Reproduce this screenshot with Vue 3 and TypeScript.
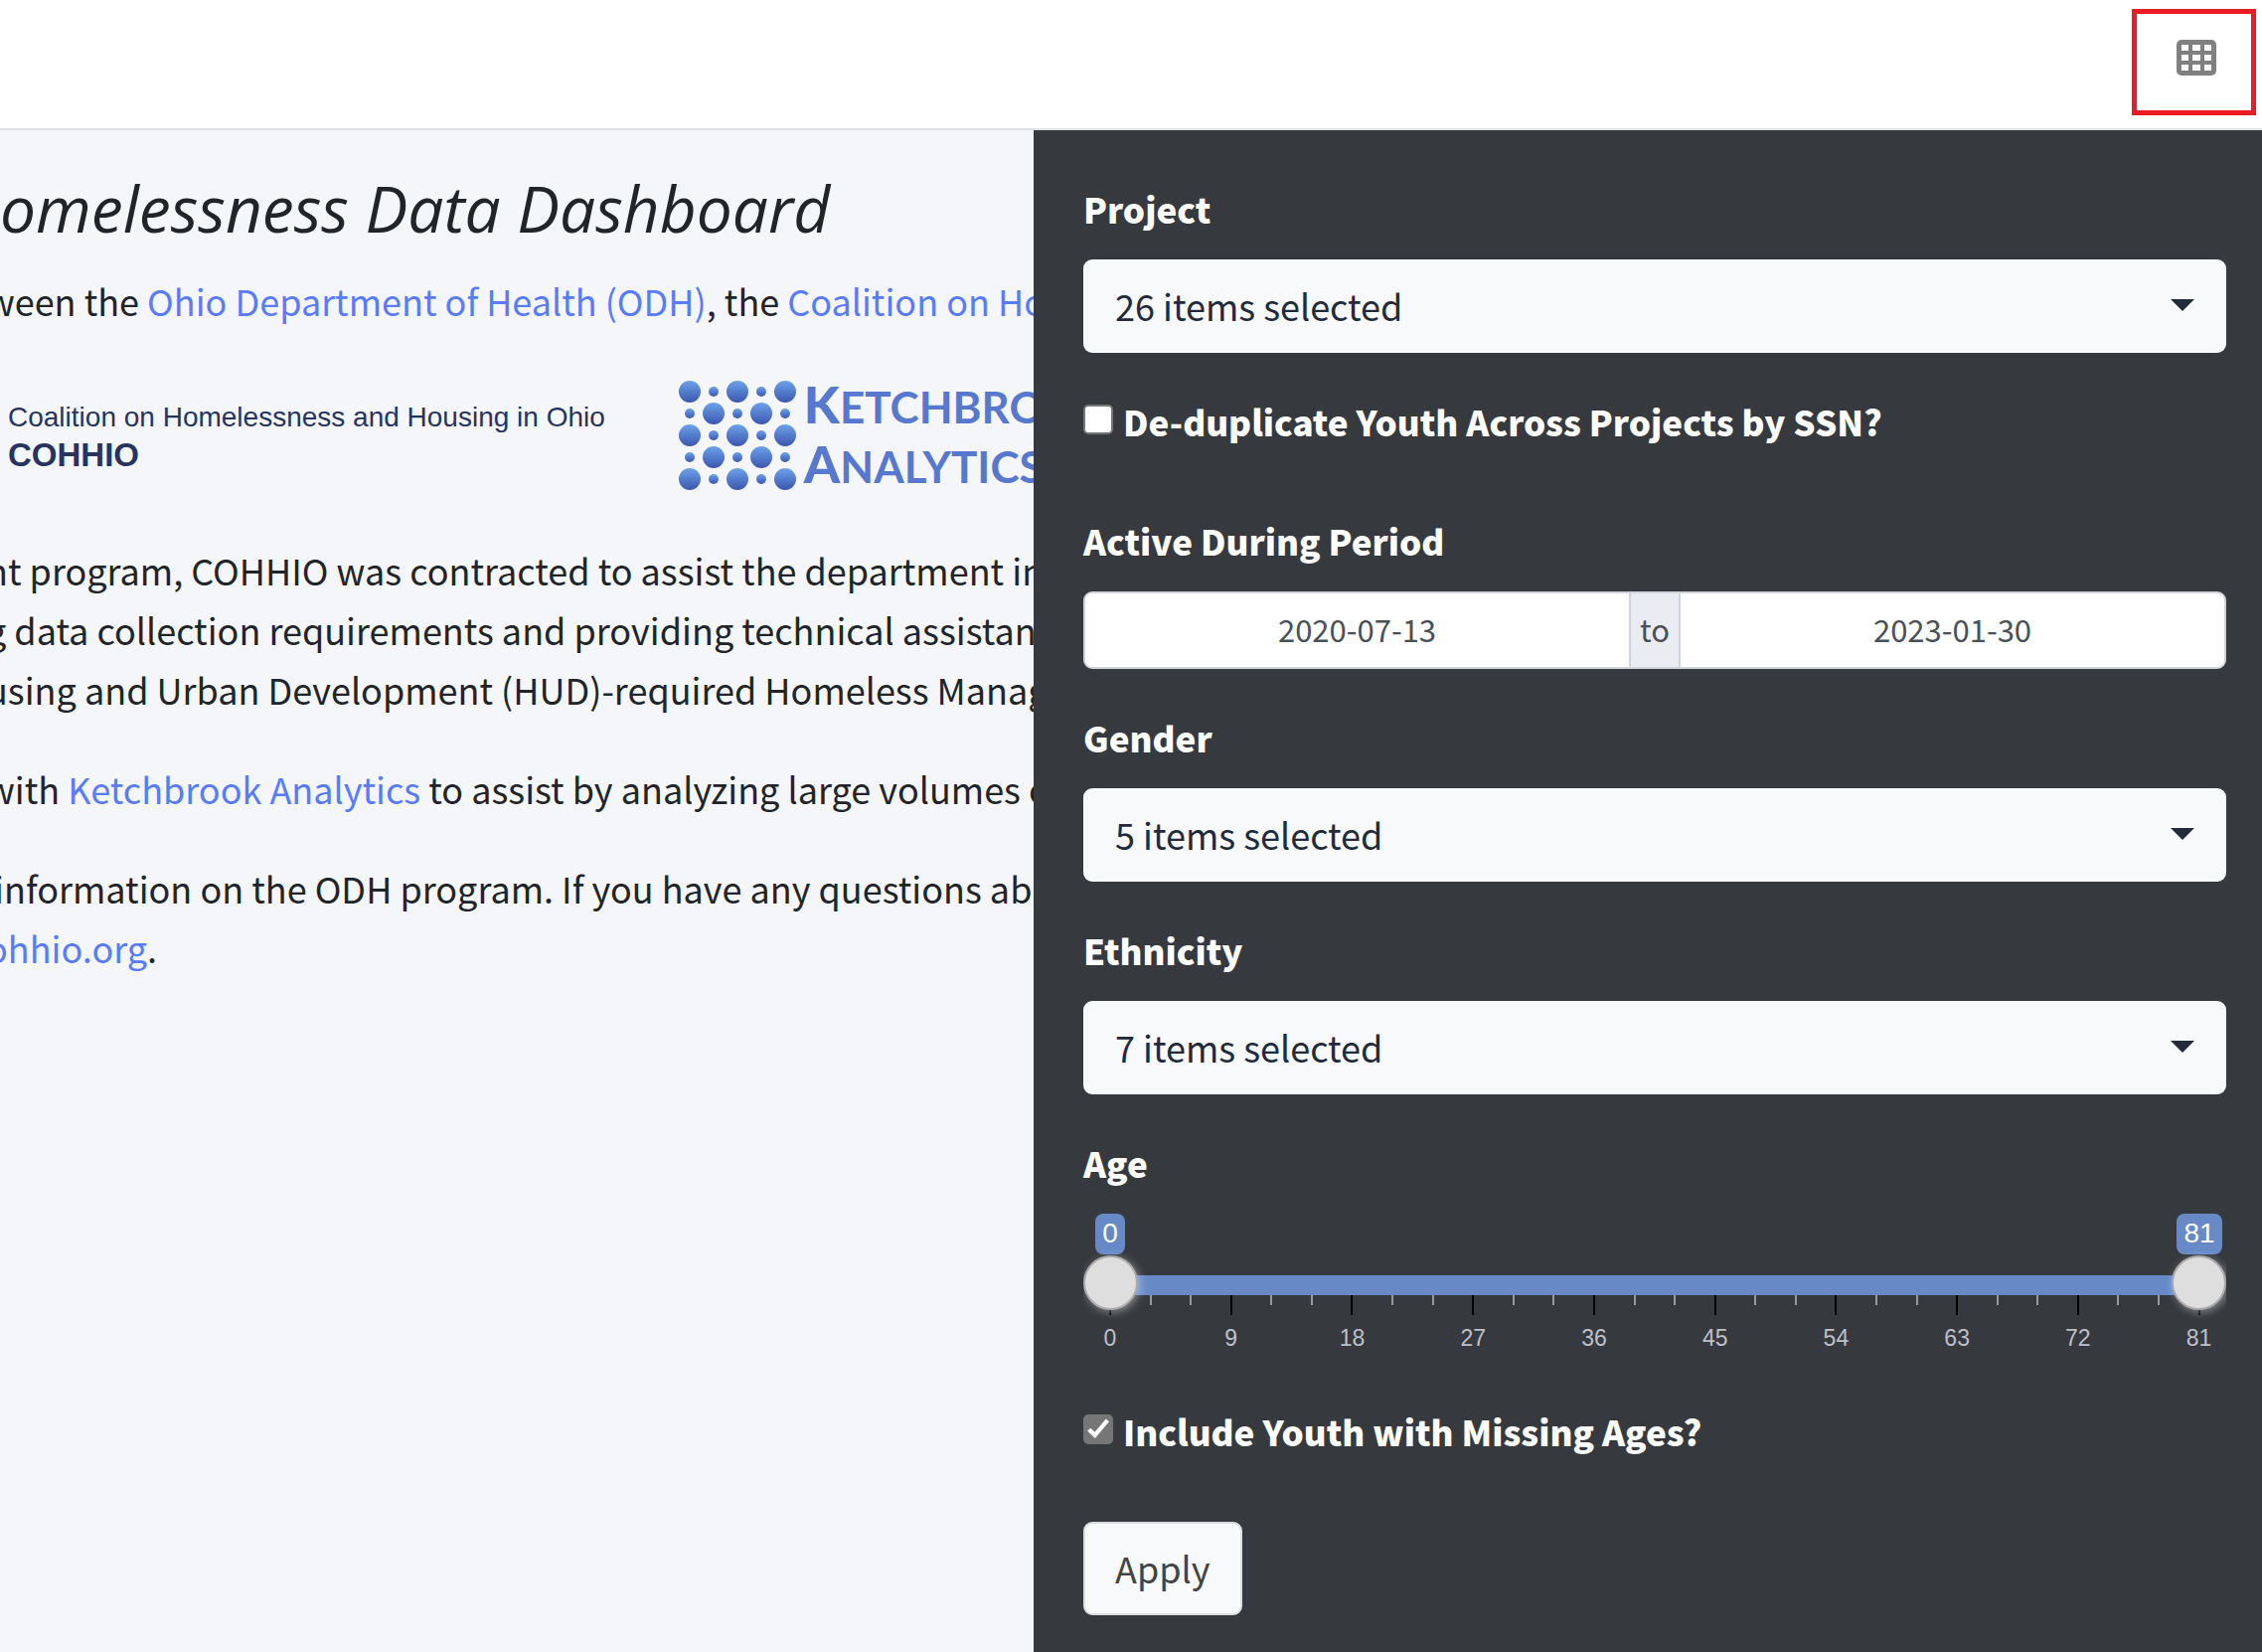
<script setup lang="ts">
import { ref } from 'vue'

interface Dot {
  x: number
  y: number
  r: number
}

const projects = ref('26 items selected')
const genders = ref('5 items selected')
const ethnicities = ref('7 items selected')
const dedupe = ref(false)
const includeMissing = ref(true)
const dateFrom = ref('2020-07-13')
const dateTo = ref('2023-01-30')
const ageMin = ref(0)
const ageMax = ref(81)

const ticks: number[] = Array.from({ length: 28 }, (_, i) => i * 3)

const dots: Dot[] = []
for (let row = 0; row < 5; row++) {
  for (let col = 0; col < 5; col++) {
    dots.push({ x: 11 + col * 24, y: 11 + row * 22, r: (row + col) % 2 === 0 ? 11 : 5 })
  }
}
</script>

<template>
  <div class="page">
    <header class="topbar">
      <button class="grid-toggle" type="button" aria-label="Toggle filters">
        <svg width="40" height="36" viewBox="0 0 40 36" aria-hidden="true">
          <path
            fill="#808080"
            fill-rule="evenodd"
            d="M5 0h30a5 5 0 0 1 5 5v26a5 5 0 0 1-5 5H5a5 5 0 0 1-5-5V5a5 5 0 0 1 5-5zM5 5v6h7V5zM16 5v6h8V5zM28 5v6h7V5zM5 15v6h7v-6zM16 15v6h8v-6zM28 15v6h7v-6zM5 25v6h7v-6zM16 25v6h8v-6zM28 25v6h7v-6z"
          />
        </svg>
      </button>
    </header>

    <div class="body">
      <main class="content">
        <h1>omelessness Data Dashboard</h1>
        <p>
          ween the <a href="#odh">Ohio Department of Health (ODH)</a>, the
          <a href="#cohhio">Coalition on Ho</a>
        </p>

        <div class="logos">
          <div class="cohhio">
            <span>Coalition on Homelessness and Housing in Ohio</span>
            <strong>COHHIO</strong>
          </div>
          <div class="ketchbrook">
            <svg width="118" height="112" viewBox="0 0 118 112" aria-hidden="true">
              <defs>
                <linearGradient id="dot" x1="0" y1="0" x2="0" y2="1">
                  <stop offset="0" stop-color="#6ba3ea" />
                  <stop offset="1" stop-color="#3c56b0" />
                </linearGradient>
              </defs>
              <circle v-for="(d, i) in dots" :key="i" :cx="d.x" :cy="d.y" :r="d.r" fill="url(#dot)" />
            </svg>
            <div class="wordmark">
              <div><b>K</b>ETCHBRO</div>
              <div><b>A</b>NALYTICS</div>
            </div>
          </div>
        </div>

        <p>
          nt program, COHHIO was contracted to assist the department in<br />
          g data collection requirements and providing technical assistanc<br />
          using and Urban Development (HUD)-required Homeless Manag
        </p>
        <p>
          with <a href="#ketchbrook">Ketchbrook Analytics</a> to assist by analyzing large volumes o
        </p>
        <p>
          &nbsp;information on the ODH program. If you have any questions abo<br />
          <a href="#mail">ohhio.org</a>.
        </p>
      </main>

      <aside class="filters">
        <div class="group">
          <label for="project">Project</label>
          <div class="picker">
            <select id="project" v-model="projects"><option>26 items selected</option></select>
          </div>
        </div>

        <div class="check">
          <input id="dedupe" v-model="dedupe" type="checkbox" />
          <label for="dedupe">De-duplicate Youth Across Projects by SSN?</label>
        </div>

        <div class="group">
          <label for="from">Active During Period</label>
          <div class="dates">
            <input id="from" v-model="dateFrom" type="text" />
            <span>to</span>
            <input v-model="dateTo" type="text" aria-label="Period end" />
          </div>
        </div>

        <div class="group">
          <label for="gender">Gender</label>
          <div class="picker">
            <select id="gender" v-model="genders"><option>5 items selected</option></select>
          </div>
        </div>

        <div class="group">
          <label for="ethnicity">Ethnicity</label>
          <div class="picker">
            <select id="ethnicity" v-model="ethnicities"><option>7 items selected</option></select>
          </div>
        </div>

        <div class="group">
          <label for="age-min">Age</label>
          <div class="slider">
            <div class="bubbles">
              <div><output for="age-min">{{ ageMin }}</output></div>
              <div><output for="age-max">{{ ageMax }}</output></div>
            </div>
            <div class="bar"></div>
            <div class="ticks">
              <div v-for="t in ticks" :key="t" class="tick" :class="{ major: t % 9 === 0 }">
                <span v-if="t % 9 === 0">{{ t }}</span>
              </div>
            </div>
            <input id="age-min" v-model.number="ageMin" type="range" min="0" max="81" />
            <input id="age-max" v-model.number="ageMax" type="range" min="0" max="81" aria-label="Maximum age" />
          </div>
        </div>

        <div class="check">
          <input id="missing" v-model="includeMissing" type="checkbox" />
          <label for="missing">Include Youth with Missing Ages?</label>
        </div>

        <button class="apply" type="button">Apply</button>
      </aside>
    </div>
  </div>
</template>

<style>
body {
  margin: 0;
  background: #f5f6fa;
}
</style>

<style scoped>
.page {
  display: flex;
  flex-direction: column;
  min-height: 100vh;
  font-family: "Source Sans Pro", "Noto Sans CJK SC", "Noto Sans", sans-serif;
  font-size: 36px;
  line-height: 60px;
  color: #212529;
}

.page * {
  box-sizing: border-box;
}

.topbar {
  display: flex;
  justify-content: flex-end;
  align-items: flex-start;
  padding: 9px 6px 13px;
  background: #fff;
  border-bottom: 2px solid #dee2e6;
}

.grid-toggle {
  display: flex;
  justify-content: center;
  align-items: flex-start;
  width: 125px;
  height: 107px;
  padding: 26px 0 0 4px;
  background: #fff;
  border: 5px solid #ed1c24;
}

.body {
  flex: 1;
  display: grid;
  grid-template-columns: minmax(0, 1040fr) minmax(0, 1236fr);
}

.content {
  overflow: hidden;
  padding-top: 37px;
  white-space: nowrap;
}

h1 {
  margin: 0 0 20px;
  font-family: "Open Sans", "Noto Sans", sans-serif;
  font-size: 64px;
  line-height: 84px;
  font-weight: 400;
  font-style: italic;
}

p {
  margin: 0 0 40px -14px;
}

a {
  color: #597cff;
  text-decoration: none;
}

.logos {
  display: flex;
  align-items: center;
  gap: 74px;
  padding: 7px 0 44px 8px;
}

.cohhio {
  display: flex;
  flex-direction: column;
  flex: none;
  font-family: "Liberation Sans", Arial, sans-serif;
  font-size: 28px;
  line-height: 38px;
  color: #28335f;
}

.cohhio strong {
  font-size: 33px;
}

.ketchbrook {
  display: flex;
  align-items: center;
  flex: none;
  gap: 8px;
}

.wordmark {
  font-family: Lato, sans-serif;
  font-size: 44px;
  line-height: 60px;
  font-weight: 700;
  color: #5778cf;
}

.wordmark b {
  font-size: 52px;
  line-height: 1;
}

.filters {
  padding: 50px 36px 36px 50px;
  background: #36393e;
}

.group {
  margin-bottom: 40px;
}

label {
  display: block;
  font-size: 35px;
  line-height: 58px;
  font-weight: 900;
  color: #fff;
}

.group > label {
  margin-bottom: 22px;
}

.picker {
  position: relative;
}

.picker::after {
  content: "";
  position: absolute;
  top: 40px;
  right: 32px;
  border: 12px solid transparent;
  border-top-color: #222b3c;
  border-bottom: 0;
  pointer-events: none;
}

select {
  display: block;
  width: 100%;
  height: 94px;
  padding: 0 32px 3px;
  appearance: none;
  font: inherit;
  color: #222b3c;
  background: #f8f9fb;
  border: 0;
  border-radius: 9px;
}

.check {
  display: flex;
  align-items: flex-start;
  gap: 10px;
  height: 60px;
  margin-bottom: 60px;
}

.check input {
  position: relative;
  flex: none;
  width: 30px;
  height: 30px;
  margin: 12px 0 0;
  appearance: none;
  background: #fff;
  border: 2px solid #767676;
  border-radius: 5px;
}

.check input:checked {
  background: #767676;
}

.check input:checked::before {
  content: "";
  position: absolute;
  inset: 0;
  background: #fff;
  clip-path: polygon(8% 56%, 20% 45%, 37% 61%, 80% 10%, 92% 20%, 38% 85%);
}

.dates {
  display: flex;
  height: 78px;
  font-size: 31px;
  line-height: 72px;
  color: #495057;
  background: #fff;
  border: 2px solid #ced4da;
  border-radius: 9px;
  overflow: hidden;
}

.dates input {
  flex: 1;
  min-width: 0;
  padding: 0 0 2px;
  font: inherit;
  color: inherit;
  text-align: center;
  background: #fff;
  border: 0;
}

.dates span {
  width: 52px;
  text-align: center;
  background: #ebecf1;
  border: solid #ced4da;
  border-width: 0 2px;
}

.slider {
  position: relative;
  height: 150px;
  overflow: hidden;
  font-family: "Liberation Sans", Arial, sans-serif;
}

.bubbles {
  display: flex;
  justify-content: space-between;
  height: 62px;
}

.bubbles div {
  display: flex;
  justify-content: center;
  align-items: flex-start;
  width: 54px;
}

output {
  padding: 0 7px 2px;
  font-size: 28px;
  line-height: 39px;
  color: #fff;
  background: #678ac7;
  border-radius: 8px;
}

.bar {
  height: 20px;
  margin: 0 27px;
  background: #678ac7;
}

.ticks {
  display: flex;
  justify-content: space-between;
  margin: 0 26px;
}

.tick {
  display: flex;
  justify-content: center;
  width: 2px;
  height: 10px;
  background: #999;
}

.tick.major {
  height: 20px;
  background: #000;
}

.tick span {
  padding-top: 29px;
  font-size: 23px;
  line-height: 28px;
  color: #bec0c8;
}

.slider input {
  position: absolute;
  top: 42px;
  left: 0;
  width: 100%;
  height: 55px;
  margin: 0;
  appearance: none;
  background: transparent;
  pointer-events: none;
}

.slider input::-webkit-slider-thumb {
  width: 55px;
  height: 55px;
  appearance: none;
  background: #dedede;
  border: 2px solid #ababab;
  border-radius: 50%;
  box-shadow: 2px 2px 8px rgba(255, 255, 255, 0.4);
  pointer-events: auto;
}

.apply {
  display: block;
  height: 94px;
  padding: 0 30px 2px;
  font: inherit;
  color: #444;
  background: #f8f9fb;
  border: 2px solid #ddd;
  border-radius: 9px;
}
</style>
